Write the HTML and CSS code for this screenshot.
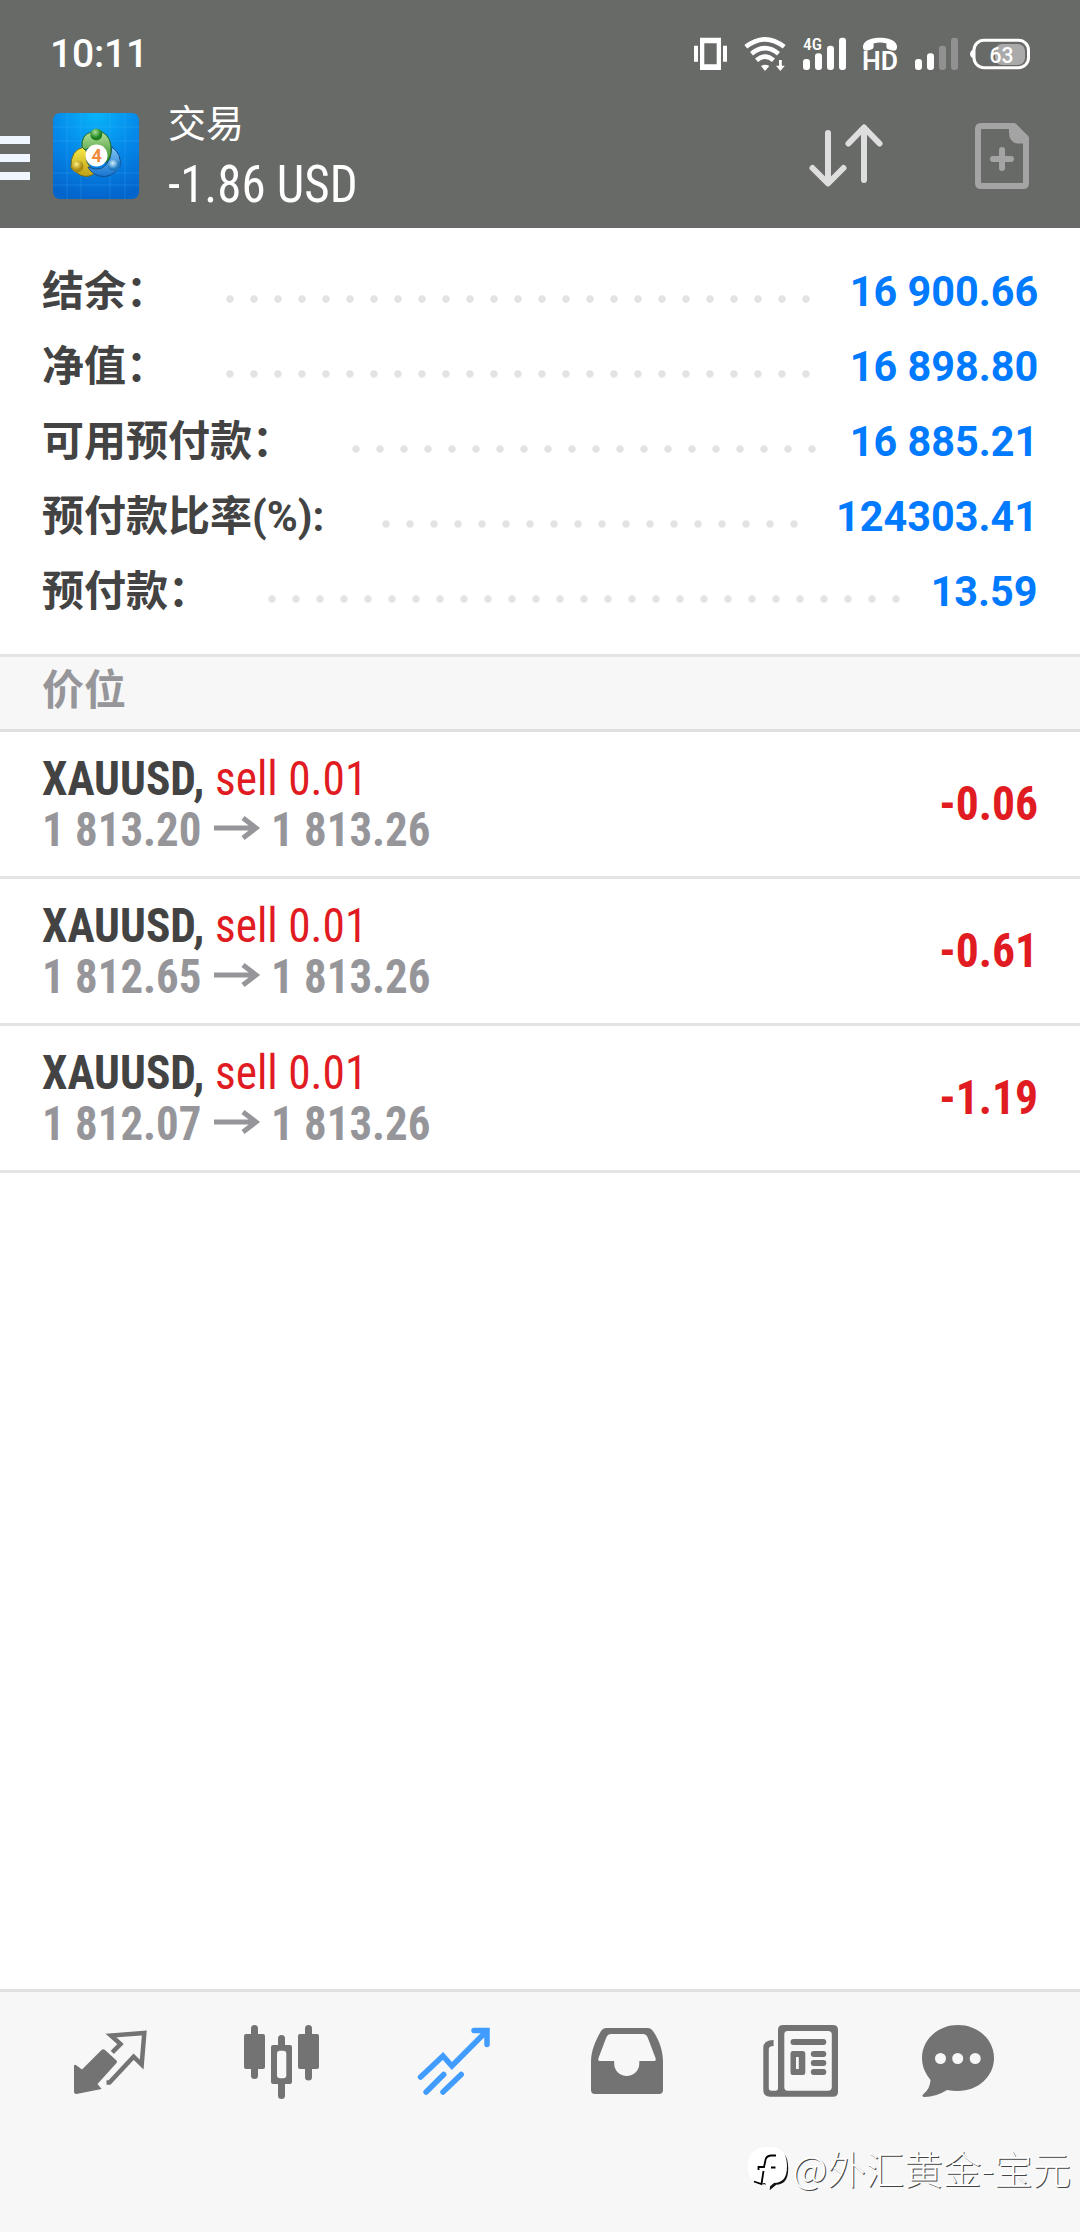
FILE: index.html
```html
<!DOCTYPE html>
<html lang="zh-CN">
<head>
<meta charset="utf-8">
<title>交易</title>
<link rel="stylesheet" href="styles.css">
</head>
<body>
<div class="screen">
  <header class="header">
    <div class="status">
      <span class="clock">10:11</span>
      <div class="status-icons">
        <svg width="33" height="34" viewBox="0 0 33 34" fill="#fff"><path fill-rule="evenodd" d="M6 .7H27V33H6ZM10.3 6.3V27.3H22.7V6.3Z"/><path d="M0 8.7H4V24.7H0ZM29 8.7H33V24.7H29Z"/></svg>
        <svg width="42" height="34" viewBox="0 0 42 34" fill="none" stroke="#fff" stroke-width="4.6"><path d="M1.8 9.8Q21-5.2 40.2 9.8M7.5 16.8Q21 5.6 34.5 16.8M12.5 23.2Q21 16 29.5 23.2"/><path d="M17 29Q21 26.5 25.3 29L21 34Z" fill="#fff" stroke="none"/><path d="M35 23H37.8V28.7H40.8L36.4 34L32 28.7H35Z" fill="#fff" stroke="none"/></svg>
        <svg width="43" height="34" viewBox="0 0 43 34" fill="#fff"><rect y="22" width="7" height="11" rx="3"/><rect x="12" y="16.3" width="7" height="16.7" rx="3"/><rect x="24" y="8.7" width="7" height="24.3" rx="3"/><rect x="36" y=".7" width="7" height="32.3" rx="3"/><text class="tiny" x="0" y="13" textLength="19" lengthAdjust="spacingAndGlyphs">4G</text></svg>
        <svg width="34" height="34" viewBox="0 0 34 34" fill="#fff"><path d="M0 9C1 3 9 .7 17 .7S33 3 34 9C34.300 13.500 32 14 29 13.500L24.500 12Q23 11 23.500 6.500Q17 4.500 10.500 6.500Q11 11 9.500 12L5 13.500C2 14-.3 13.500 0 9Z"/><text class="hd" x="-1" y="33" textLength="36" lengthAdjust="spacingAndGlyphs">HD</text></svg>
        <svg class="sim" width="43" height="34" viewBox="0 0 43 34" fill="#fff"><rect y="22" width="7" height="11" rx="3"/><rect x="12" y="16.3" width="7" height="16.7" rx="3"/><rect x="24" y="8.7" width="7" height="24.3" rx="3" fill="#909190"/><rect x="36" y=".7" width="7" height="32.3" rx="3" fill="#909190"/></svg>
        <svg class="battery" width="60" height="34" viewBox="0 0 60 34"><rect x="25" y="7" width="30" height="21" rx="7" fill="#a9aaa9"/><rect x="4" y="3.200" width="54.500" height="27.500" rx="10" fill="none" stroke="#fff" stroke-width="3"/><path d="M4 12Q0 14 0 17T4 22Z" fill="#fff"/><text class="charge" x="19.500" y="25.500" textLength="24" lengthAdjust="spacingAndGlyphs">63</text></svg>
      </div>
    </div>
    <div class="toolbar">
      <div class="menu"><i></i><i></i><i></i></div>
      <svg class="logo" width="86" height="86" viewBox="0 0 86 86">
        <defs>
          <radialGradient id="sky" cx=".5" cy="0" r="1"><stop offset="0" stop-color="#08b4fb"/><stop offset=".55" stop-color="#0486e8"/><stop offset="1" stop-color="#0465cc"/></radialGradient>
          <linearGradient id="green" x2="0" y2="1"><stop stop-color="#b4e09a"/><stop offset="1" stop-color="#2c8c24"/></linearGradient>
          <linearGradient id="gold" x2="0" y2="1"><stop stop-color="#f6ea48"/><stop offset="1" stop-color="#bfa018"/></linearGradient>
          <linearGradient id="blue" x2="0" y2="1"><stop stop-color="#7cc4f4"/><stop offset="1" stop-color="#1874d0"/></linearGradient>
          <radialGradient id="gh" cx=".4" cy=".3"><stop stop-color="#a5e39a"/><stop offset="1" stop-color="#1d801d"/></radialGradient>
          <radialGradient id="yh" cx=".4" cy=".3"><stop stop-color="#fff080"/><stop offset="1" stop-color="#a88a10"/></radialGradient>
          <radialGradient id="bh" cx=".4" cy=".3"><stop stop-color="#d4f0ff"/><stop offset="1" stop-color="#1d78c0"/></radialGradient>
        </defs>
        <rect width="86" height="86" rx="7" fill="url(#sky)"/>
        <path d="M0 14H86M0 28H86M0 60H86M0 72H86M14 0V86M28 0V86M57 0V86M72 0V86" stroke="#52c0ff" stroke-opacity=".22" fill="none"/>
        <path d="M18 55Q17 37 31 34L34 40Q30 50 43 59Q36 66 27 62Z" fill="url(#gold)" stroke="#6d6a20" stroke-width="1"/>
        <path d="M59 34Q69 41 67 54Q58 66 46 63Q38 60 35 54Q51 61 57 45Z" fill="url(#blue)" stroke="#164f8c" stroke-width="1"/>
        <path d="M29 34Q28 22 38 19H49Q59 24 58 38Q58 46 52 50L50 37Q43 29 32 37Z" fill="url(#green)" stroke="#22641f" stroke-width="1"/>
        <circle cx="43.300" cy="21.500" r="6" fill="url(#gh)"/><circle cx="24.500" cy="53.500" r="6" fill="url(#yh)"/><circle cx="61" cy="52.500" r="6" fill="url(#bh)"/>
        <circle cx="43.500" cy="42.500" r="11" fill="#fff"/><text class="four" x="38.500" y="48.500">4</text>
      </svg>
      <div class="heading"><div class="title">交易</div><div class="profit">-1.86 USD</div></div>
      <svg class="sort" width="76" height="68" viewBox="0 0 76 68" fill="none" stroke="#dedede" stroke-width="6" stroke-linecap="round" stroke-linejoin="round"><path d="M20 12V62M4.500 47L20 62.500L35.500 47M56 59V7M40.500 22.500L56 6.500L71.500 22.500"/></svg>
      <svg class="add" width="54" height="66" viewBox="0 0 54 66" fill="none" stroke="#a3a4a3" stroke-width="6" stroke-linejoin="round" stroke-linecap="round"><path d="M6 3H39L51 15V60Q51 63 48 63H6Q3 63 3 60V6Q3 3 6 3Z"/><path d="M36 3.500V9Q36 18.500 44 18.500H51V15L39 3Z" fill="#a3a4a3" stroke-width="4"/><path d="M18 36H36M27 27V45"/></svg>
    </div>
  </header>

  <section class="account">
    <div class="line"><span class="label">结余：</span><span class="dots"></span><span class="value">16 900.66</span></div>
    <div class="line"><span class="label">净值：</span><span class="dots"></span><span class="value">16 898.80</span></div>
    <div class="line"><span class="label">可用预付款：</span><span class="dots"></span><span class="value">16 885.21</span></div>
    <div class="line"><span class="label">预付款比率(%):</span><span class="dots"></span><span class="value">124303.41</span></div>
    <div class="line"><span class="label">预付款：</span><span class="dots"></span><span class="value">13.59</span></div>
  </section>

  <h2 class="section">价位</h2>
  <main class="positions">
    <div class="position">
      <div class="deal"><div class="order"><b>XAUUSD,</b><span>sell 0.01</span></div>
      <div class="prices"><span>1 813.20</span><svg class="arrow" viewBox="0 0 46 24"><path d="M0 12H42M29 2L42 12L29 22"/></svg><span>1 813.26</span></div></div>
      <div class="amount">-0.06</div>
    </div>
    <div class="position">
      <div class="deal"><div class="order"><b>XAUUSD,</b><span>sell 0.01</span></div>
      <div class="prices"><span>1 812.65</span><svg class="arrow" viewBox="0 0 46 24"><path d="M0 12H42M29 2L42 12L29 22"/></svg><span>1 813.26</span></div></div>
      <div class="amount">-0.61</div>
    </div>
    <div class="position">
      <div class="deal"><div class="order"><b>XAUUSD,</b><span>sell 0.01</span></div>
      <div class="prices"><span>1 812.07</span><svg class="arrow" viewBox="0 0 46 24"><path d="M0 12H42M29 2L42 12L29 22"/></svg><span>1 813.26</span></div></div>
      <div class="amount">-1.19</div>
    </div>
  </main>

  <nav class="tabs">
    <svg viewBox="0 0 80 80"><path d="M4 43.500Q5 42 6.500 43.500L12 47.500L31.500 28Q33.300 26.300 35 28L46.500 38.500Q47.500 40 46.500 41L27.500 62L31.600 67L6.500 72Q4 72 4 70Z"/><path class="stroke4" d="M42.300 30.300L50.500 22L41 13.500L74.300 11L71.700 42.500L63.600 34.700L39.500 60.500H36.500"/></svg>
    <svg viewBox="0 0 80 80"><rect x="2" y="12" width="21" height="35" rx="2"/><rect x="9" y="3" width="7" height="54" rx="3.500"/><rect x="56" y="12" width="21" height="35" rx="2"/><rect x="63" y="3" width="7" height="55.500" rx="3.500"/><rect x="36" y="13" width="7" height="64" rx="3.500"/><rect x="29" y="23" width="21" height="39" rx="2"/><rect class="hole" x="35" y="28.700" width="9.300" height="27.600" rx="3"/></svg>
    <svg class="active" viewBox="0 0 80 80"><path d="M6.600 55L29 34L37.900 44L72.700 9M60 8.500H73V22.500M29.700 52.500L12.100 70M47.200 52.500L29 70"/></svg>
    <svg viewBox="0 0 80 80"><path fill-rule="evenodd" d="M4 68V40C4 28 9 18 14 9Q16 6 19 6H61Q64 6 66 9C72 18 76 28 76 40V68Q76 72 72 72H8Q4 72 4 68ZM11.500 36Q10.500 39 13 39H27.200V41.500C27.200 49 33 54 39.700 54S52.300 49 52.300 41.500V39H67Q69.500 39 68.500 36L60.500 15Q59 12 56 12H24Q21 12 19.500 15Z"/></svg>
    <svg viewBox="0 0 80 80"><path fill-rule="evenodd" d="M23 3H73Q78 3 78 8V70Q78 74.700 73 74.700H10Q3.300 74.700 3.300 68V26Q3.300 18 13.600 18V24Q8.800 24 8.800 27V66Q8.800 68.700 11.500 68.700H15.500Q18 68.700 18 66V8Q18 3 23 3ZM27.500 9Q24.300 9 24.300 12.500V65Q24.300 68.700 27.500 68.700H68Q71.800 68.700 71.800 65V12.500Q71.800 9 68 9ZM32.500 29H43Q45.300 29 45.300 31.500V50.500Q45.300 53 43 53H32.500Q30.500 53 30.500 50.500V31.500Q30.500 29 32.500 29ZM36 35V47H38.800V35Z"/><rect x="30.500" y="17" width="35.800" height="6" rx="3"/><rect x="50.800" y="29" width="15.500" height="6" rx="3"/><rect x="50.800" y="38" width="15.500" height="6" rx="3"/><rect x="50.800" y="47" width="15.500" height="6" rx="3"/></svg>
    <svg viewBox="0 0 80 80"><path d="M40 3C60 3 76 17.500 76 36S60 69 40 69Q34 69 29 68Q18 75 6.500 75Q3 75 5.500 72Q12 67 12.500 58C7 51 4 44 4 36C4 17.500 20 3 40 3Z"/><g class="hole"><circle cx="22.500" cy="36.500" r="5.500"/><circle cx="39.700" cy="36.500" r="5.500"/><circle cx="57.200" cy="36.500" r="5.500"/></g></svg>
  </nav>

  <div class="watermark">
    <svg width="44" height="50" viewBox="0 0 44 50"><path d="M21 7C33 6 39 11 39 25C39 38 34 41 27 41.500L20.500 47L21 42L15 41C5 40 2 34 2 24C2 12 9 7 21 7Z" fill="#111" transform="translate(1.200 1.200)"/><path d="M20 5C33 4 39 10 39 24C39 37 34 40.500 26 41L20 46L17 41L14 41.500C4 42 0 34 0 24C0 11 7 5 20 5Z" fill="#fff"/><path d="M28 13.500H23Q18 14 17.500 18L16 25H10.500V28M15.500 29L13.500 42L6 39.500M23 25.500H27.500" fill="none" stroke="#000" stroke-width="1.800"/></svg>
    <span>@外汇黄金-宝元</span>
  </div>
</div>
</body>
</html>
```
FILE: styles.css
```css
* { box-sizing: border-box; }
body { margin: 0; background: #fff; font-family: Roboto, "Noto Sans CJK SC", sans-serif; }
svg { display: block; flex: none; overflow: visible; }
.screen { position: relative; display: flex; flex-direction: column; width: 1080px; height: 2232px; overflow: hidden; }

.header { height: 228px; background: #686a67; color: #fff; }
.status { display: flex; justify-content: space-between; height: 108px; padding: 29px 50px 0 50px; }
.clock { font-size: 39px; line-height: 51px; font-weight: 500; letter-spacing: -.2px; }
.status-icons { display: flex; gap: 17px; padding-top: 8px; }
.sim { margin-left: 1px; }
.battery { margin-left: -5px; }
.tiny { font: 500 17px "Roboto Condensed", Roboto, sans-serif; }
.hd { font: 600 25px Roboto, sans-serif; }
.charge { font: 500 22px Roboto, sans-serif; fill: #fff; }

.toolbar { display: flex; height: 120px; }
.menu { display: flex; flex-direction: column; gap: 10px; width: 53px; padding-top: 28px; }
.menu i { width: 30px; height: 8px; background: #f0f6ff; }
.logo { margin-top: 5px; }
.four { font: 700 18px Roboto, sans-serif; fill: #f08a3c; }
.heading { flex: 1; padding-left: 29px; }
.title { margin-top: -12px; font-size: 38px; line-height: 56px; font-weight: 400; }
.profit { font-family: "Roboto Condensed", Roboto, sans-serif; font-size: 51px; line-height: 65px; font-weight: 430; white-space: nowrap; transform: scaleX(.96); transform-origin: left; }
.sort { margin: 13px 91px 0 0; }
.add { margin: 15px 51px 0 0; }

.account { height: 426px; padding: 26px 42px 0 42px; }
.line { display: flex; align-items: center; height: 75px; font-size: 42px; font-weight: 700; }
.label { color: #434343; line-height: 75px; }
.dots { flex: 1; height: 8px; margin: 15px 22.500px 0 50px; background: radial-gradient(circle at 12px 4px, #e3e3e3 3.300px, transparent 4.200px) 0 0 / 24px 8px repeat-x; }
.value { color: #007aff; line-height: 75px; transform: scaleX(.985); transform-origin: right; }

.section { height: 78px; margin: 0; padding-left: 42px; border-top: 3px solid #e4e4e4; border-bottom: 3px solid #e0e0e0; background: #f7f7f7; color: #96969a; font-size: 42px; line-height: 67px; font-weight: 700; }
.position { display: flex; justify-content: space-between; height: 147px; padding: 0 42px; border-bottom: 3px solid #e4e4e4; font-family: "Roboto Condensed", Roboto, sans-serif; font-size: 48px; }
.deal { padding-top: 21px; }
.order, .prices { display: flex; height: 51px; line-height: 51px; white-space: nowrap; }
.order b { width: 173px; color: #434343; transform: scaleX(.945); transform-origin: left; }
.order span { color: #e11b22; transform: scaleX(.945); transform-origin: left; }
.prices { color: #96969a; font-weight: 700; }
.prices span { width: 159px; transform: scaleX(.935); transform-origin: left; }
.arrow { width: 46px; height: 24px; margin: 12px 11px 0 13px; fill: none; stroke: #96969a; stroke-width: 5; }
.amount { color: #e11b22; font-weight: 700; line-height: 144px; transform: scaleX(.95); transform-origin: right; }

.tabs { display: grid; grid-template-columns: 172px 172px 172px 173px 173px 144px; justify-items: center; align-items: start; height: 243px; margin-top: auto; padding: 30px 0 0 24px; border-top: 3px solid #e1e1e1; background: #f7f7f7; }
.tabs svg { width: 80px; height: 80px; fill: #737373; }
.tabs .stroke4 { fill: none; stroke: #737373; stroke-width: 4.500; }
.tabs .hole { fill: #f7f7f7; }
.tabs .active { fill: none; stroke: #409cff; stroke-width: 5.500; stroke-linecap: round; }

.watermark { position: absolute; right: 9px; top: 2142px; display: flex; align-items: center; color: #fff; font-family: "Noto Sans CJK SC", sans-serif; font-size: 38.500px; line-height: 50px; font-weight: 300; text-shadow: 1px 1px 0 #444; white-space: nowrap; }
```
